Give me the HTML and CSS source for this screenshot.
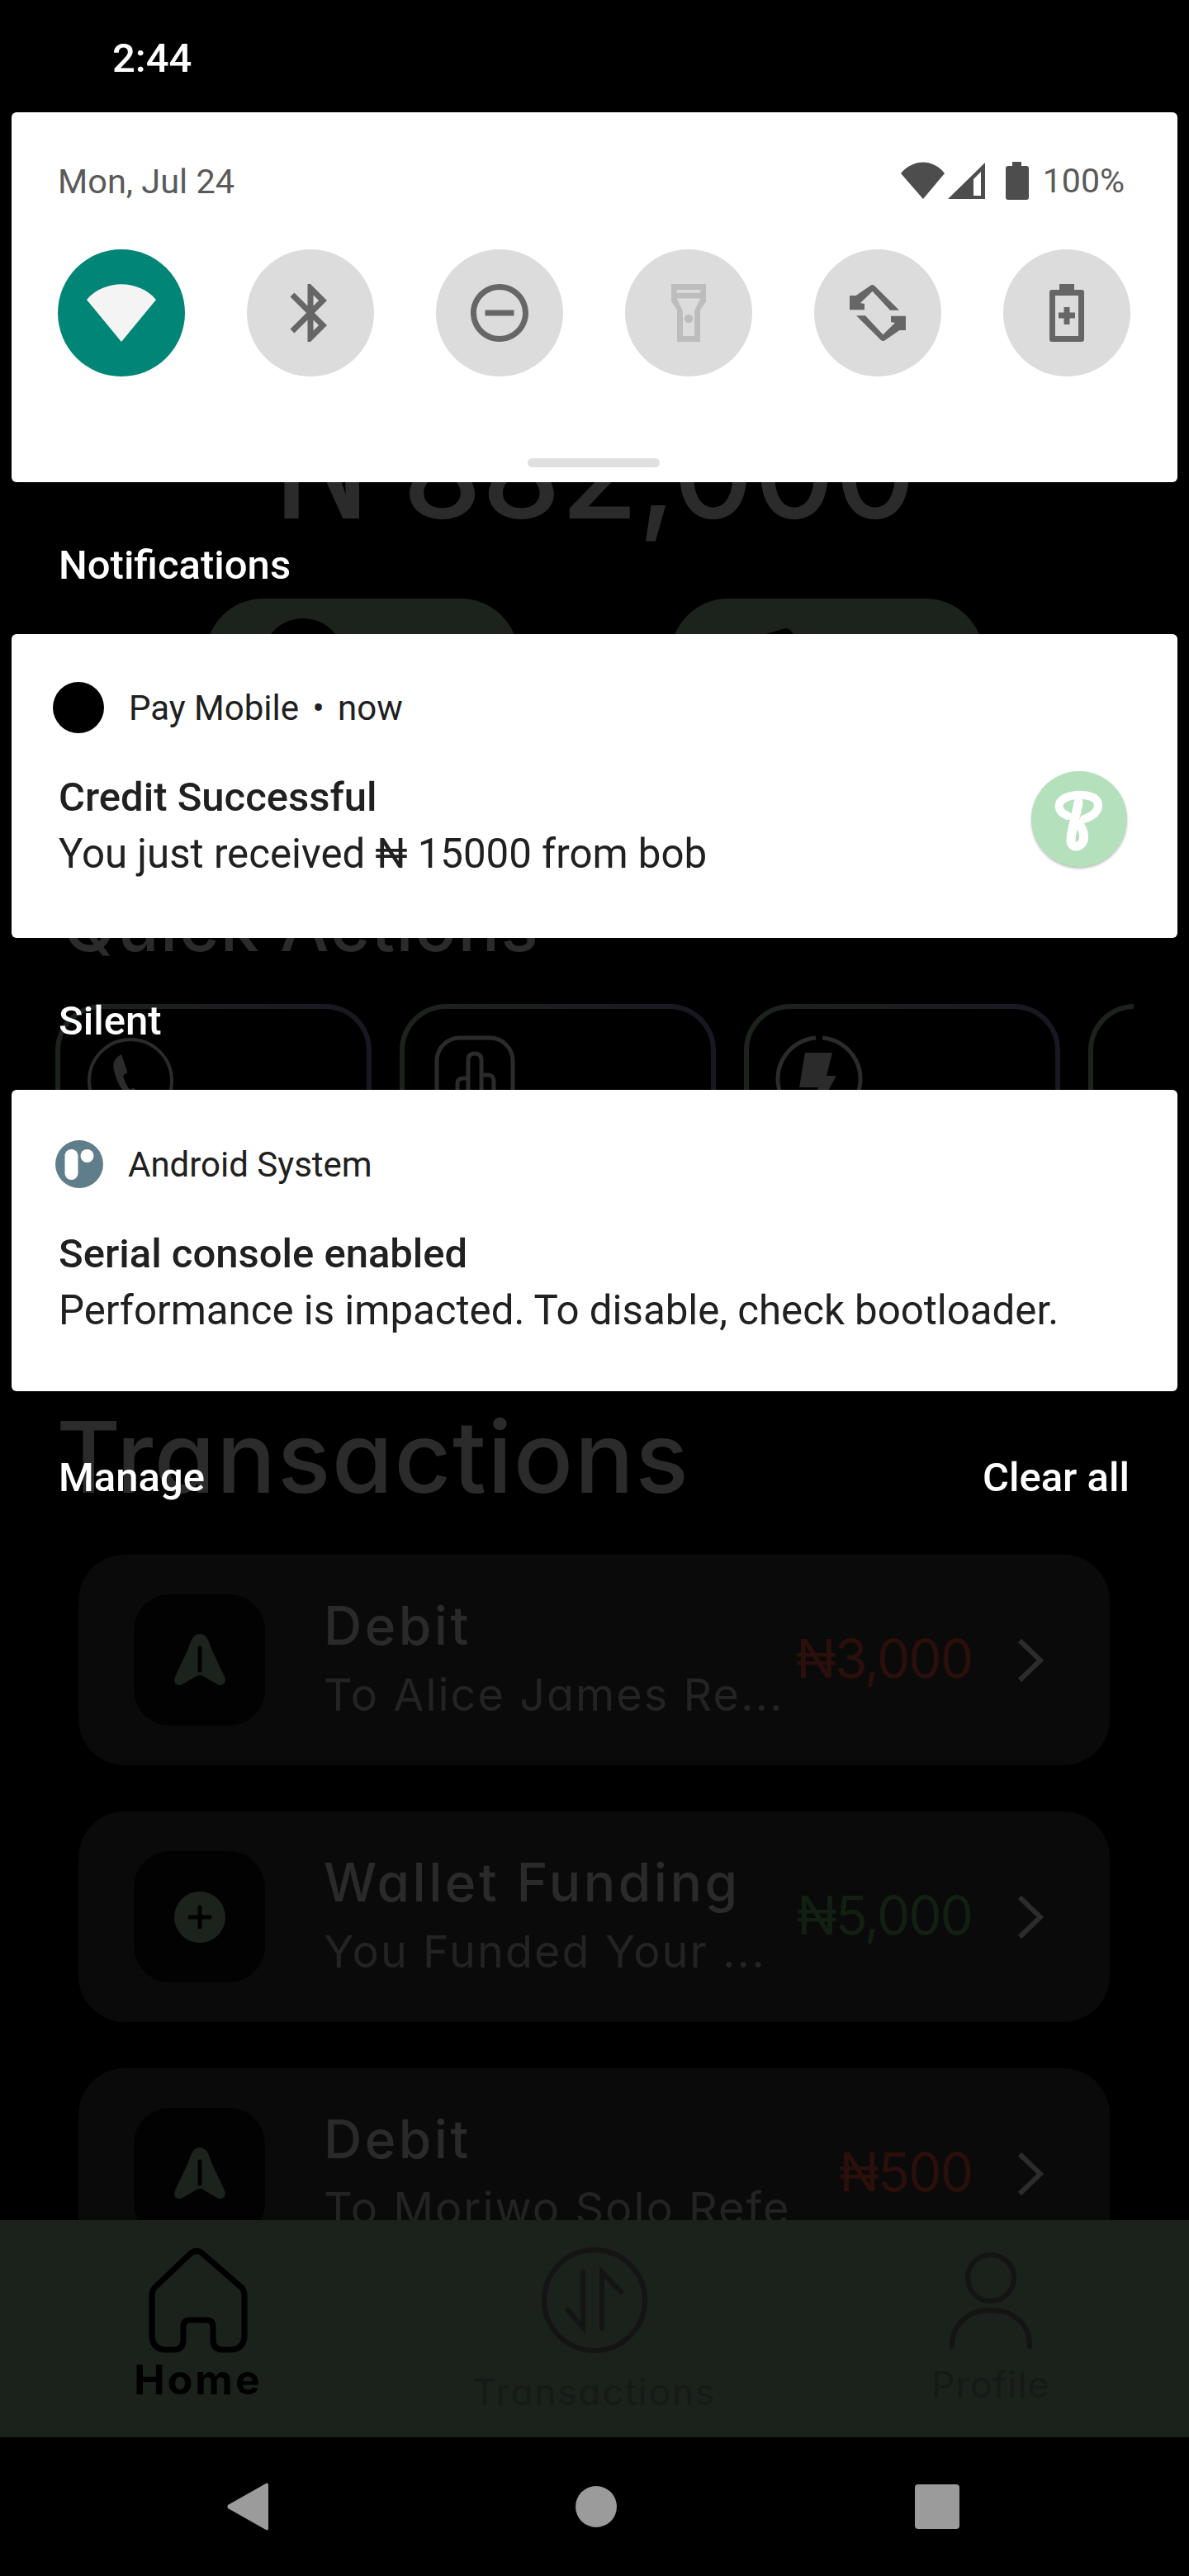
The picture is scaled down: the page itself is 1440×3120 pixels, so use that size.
FILE: index.html
```html
<!DOCTYPE html>
<html lang="en">
<head>
  <meta charset="UTF-8" />
  <title>Pay Mobile - Notification Shade</title>
  <link rel="stylesheet" href="styles.css">
</head>
<body>
  <div class="screen">

    <!-- the app, dimmed behind the shade -->
    <div class="app">
      <div class="scroll">
        <div class="balance"><span class="naira">₦</span> 882,000</div>

        <div class="pills">
          <div class="pill"><span class="pill-dot"></span></div>
          <div class="pill pill-send">
            <svg width="60" height="24" viewBox="0 0 60 24"><path d="M0 10L34 0q6 0 10 7l2 17H0z" fill="#000" /></svg>
          </div>
        </div>

        <h2 class="quick-title">Quick Actions</h2>

        <div class="actions">
          <div class="action">
            <svg width="110" height="110" viewBox="0 0 110 110" fill="none" stroke="#2b2b2b" stroke-width="4">
              <circle cx="55" cy="55" r="50" />
              <path d="M43 26c-5 3-8 8-6 16 3 14 10 26 20 35l6 5c3-2 6-5 5-7l-10-9-5 2c-5-7-8-13-9-20l5-4z" fill="#2b2b2b" />
            </svg>
          </div>
          <div class="action">
            <svg width="110" height="110" viewBox="0 0 110 110" fill="none" stroke="#2b2b2b" stroke-width="5">
              <rect x="9" y="3" width="92" height="104" rx="28" />
              <path d="M34 100V58q0-6 7-6h6M47 80V30q0-8 8-8t8 8v60M63 48h8q7 0 7 8v44" />
            </svg>
          </div>
          <div class="action">
            <svg width="110" height="110" viewBox="0 0 110 110" fill="none" stroke="#2b2b2b" stroke-width="5">
              <path d="M51 3a50 50 0 1 0 8 0" />
              <path d="M38 21h33l-7 28h12l-29 52 7-38H31z" fill="#2b2b2b" stroke="none" />
            </svg>
          </div>
          <div class="action">
            <svg width="110" height="110" viewBox="0 0 110 110" fill="none" stroke="#2b2b2b" stroke-width="5">
              <path d="M48 20c-9 8-12 18-10 30" stroke-width="10" />
            </svg>
          </div>
        </div>

        <h2 class="trans-title">Transactions</h2>

        <div class="list">
          <div class="tx">
            <div class="tx-icon">
              <svg width="64" height="64" viewBox="0 0 64 64"><path d="M32 0c8 0 11 8 14 18l16 34c3 8-3 12-9 9L36 51q-4-2-8 0L11 61c-6 3-12-1-9-9l16-34C21 8 24 0 32 0z" fill="#1c231c" /><path d="M32 17v27" stroke="#020202" stroke-width="5" stroke-linecap="round" /></svg>
            </div>
            <div class="tx-text">
              <div class="tx-name">Debit</div>
              <div class="tx-sub">To Alice James Re...</div>
            </div>
            <div class="tx-amt debit">₦3,000</div>
            <svg class="tx-arrow" width="32" height="52" viewBox="0 0 32 52"><path d="M3 2l25 24L3 50" fill="none" stroke="#2c2c2c" stroke-width="6" /></svg>
          </div>

          <div class="tx">
            <div class="tx-icon">
              <svg width="64" height="64" viewBox="0 0 64 64"><circle cx="32" cy="32" r="31" fill="#1c231c" /><path d="M32 20v24M20 32h24" stroke="#020202" stroke-width="5" stroke-linecap="round" /></svg>
            </div>
            <div class="tx-text">
              <div class="tx-name">Wallet Funding</div>
              <div class="tx-sub">You Funded Your ...</div>
            </div>
            <div class="tx-amt credit">₦5,000</div>
            <svg class="tx-arrow" width="32" height="52" viewBox="0 0 32 52"><path d="M3 2l25 24L3 50" fill="none" stroke="#2c2c2c" stroke-width="6" /></svg>
          </div>

          <div class="tx">
            <div class="tx-icon">
              <svg width="64" height="64" viewBox="0 0 64 64"><path d="M32 0c8 0 11 8 14 18l16 34c3 8-3 12-9 9L36 51q-4-2-8 0L11 61c-6 3-12-1-9-9l16-34C21 8 24 0 32 0z" fill="#1c231c" /><path d="M32 17v27" stroke="#020202" stroke-width="5" stroke-linecap="round" /></svg>
            </div>
            <div class="tx-text">
              <div class="tx-name">Debit</div>
              <div class="tx-sub">To Moriwo Solo Refe</div>
            </div>
            <div class="tx-amt debit">₦500</div>
            <svg class="tx-arrow" width="32" height="52" viewBox="0 0 32 52"><path d="M3 2l25 24L3 50" fill="none" stroke="#2c2c2c" stroke-width="6" /></svg>
          </div>
        </div>
      </div>

      <nav class="tabs">
        <div class="tab tab-home">
          <svg width="120" height="128" viewBox="0 0 120 128" fill="none" stroke="#000" stroke-width="7">
            <path d="M49 9q9-9 18 0l46 40q3 4 3 9v48q0 18-18 18h-8q-12 0-12-12V96q0-8-8-8H50q-8 0-8 8v16q0 12-12 12h-8Q4 124 4 106V58q0-5 3-9z" />
          </svg>
          <span>Home</span>
        </div>
        <div class="tab tab-trans">
          <svg width="130" height="128" viewBox="0 0 130 128" fill="none" stroke="#141414" stroke-width="6">
            <ellipse cx="65" cy="64" rx="61" ry="61" />
            <path d="M51 30v67L33 76M74 98V30l23 24" stroke-linecap="round" />
          </svg>
          <span>Transactions</span>
        </div>
        <div class="tab tab-profile">
          <svg width="110" height="128" viewBox="0 0 110 128" fill="none" stroke="#141414" stroke-width="6">
            <circle cx="55" cy="37" r="28" />
            <path d="M8 120c0-28 20-44 47-44s47 16 47 44" stroke-linecap="round" />
          </svg>
          <span>Profile</span>
        </div>
      </nav>
    </div>

    <div class="navbar">
      <svg width="50" height="58" viewBox="0 0 50 58"><path d="M47 1c2-1 3 0 3 2v52c0 2-1 3-3 2L1 31q-1-2 0-4z" fill="#9b9b9b" /></svg>
      <span class="nav-home"></span>
      <span class="nav-recent"></span>
    </div>

    <!-- notification shade on top of the app -->
    <div class="shade">
      <div class="status"><span class="clock">2:44</span></div>

      <section class="qs">
        <div class="qs-top">
          <span class="qs-date">Mon, Jul 24</span>
          <div class="qs-status">
            <svg width="54" height="46" viewBox="0 0 54 46"><path d="M0 14C15 -4 39 -4 53 14L27 45z" fill="#4d4d4d" /></svg>
            <svg class="sig" width="46" height="44" viewBox="0 0 46 44"><path fill-rule="evenodd" d="M45 0v44H0zM31 20v20h9V11z" fill="#4d4d4d" /></svg>
            <svg class="bat" width="28" height="46" viewBox="0 0 28 46"><path d="M8 0h11v5h6q3 0 3 3v35q0 3-3 3H3q-3 0-3-3V8q0-3 3-3h5z" fill="#4d4d4d" /></svg>
            <span class="qs-batt">100%</span>
          </div>
        </div>

        <div class="toggles">
          <div class="toggle on">
            <svg width="84" height="84" viewBox="0 0 84 84"><path d="M0 26C21 1 63 1 84 26L42 77z" fill="#f4f4f4" /></svg>
          </div>
          <div class="toggle">
            <svg width="84" height="84" viewBox="0 0 24 24"><path d="M17.71 7.71L12 2h-1v7.59L6.41 5 5 6.41 10.59 12 5 17.59 6.41 19 11 14.41V22h1l5.71-5.71-4.3-4.29 4.3-4.29zM13 5.83l1.88 1.88L13 9.59V5.83zm1.88 10.46L13 18.17v-3.76l1.88 1.88z" fill="#666" /></svg>
          </div>
          <div class="toggle">
            <svg width="84" height="84" viewBox="0 0 24 24"><path d="M12 2C6.48 2 2 6.48 2 12s4.48 10 10 10 10-4.48 10-10S17.52 2 12 2zm0 18c-4.42 0-8-3.58-8-8s3.58-8 8-8 8 3.58 8 8-3.58 8-8 8zM7 11h10v2H7z" fill="#666" /></svg>
          </div>
          <div class="toggle">
            <svg width="84" height="84" viewBox="0 0 24 24"><path fill-rule="evenodd" d="M6 2h12v6l-2 3v11H8V11L6 8zM7.900 4v1.100h8.200V4zM7.900 7l2.100 4.300V20h4v-8.700L16.100 7z" fill="#bdbdbd" /><circle cx="12" cy="14" r="1.500" fill="#bdbdbd" /></svg>
          </div>
          <div class="toggle">
            <svg width="84" height="84" viewBox="0 0 84 84" fill="#666">
              <path d="M8 21h7.600L33 9q2.600-2 5 0l30 29.700H57L35.600 15.700 21 30l5 1v7.300H8z" />
              <path d="M8 21h7.600L33 9q2.600-2 5 0l30 29.700H57L35.600 15.700 21 30l5 1v7.300H8z" transform="rotate(180 42 42)" />
            </svg>
          </div>
          <div class="toggle">
            <svg width="84" height="84" viewBox="0 0 84 84"><path fill-rule="evenodd" d="M33 7h18v7h9q3 0 3 3v57q0 3-3 3H24q-3 0-3-3V17q0-3 3-3h9zM28 21v49h28V21z" fill="#666" /><path d="M38.500 35h7v6.500H52v7h-6.500V56h-7v-7.500H32v-7h6.500z" fill="#666" /></svg>
          </div>
        </div>

        <div class="qs-handle"></div>
      </section>

      <h3 class="section-label">Notifications</h3>

      <article class="note note-pay">
        <div class="note-head">
          <span class="app-dot"></span>
          <span class="note-app">Pay Mobile <i>•</i> now</span>
        </div>
        <div class="note-row">
          <div class="note-copy">
            <div class="note-title">Credit Successful</div>
            <div class="note-body">You just received ₦ 15000 from bob</div>
          </div>
          <div class="note-logo">
            <svg width="116" height="116" viewBox="0 0 116 116" fill="none" stroke="#fff" stroke-linecap="round">
              <path d="M44 54C32 50 30 38 40 33c12-6 42-7 41 9-1 10-11 14-17 16" stroke-width="10" />
              <path d="M57 38c-3 18-9 34-9 46 0 10 12 9 15 0 2-8-1-14-5-20" stroke-width="11" />
            </svg>
          </div>
        </div>
      </article>

      <h3 class="section-label">Silent</h3>

      <article class="note note-sys">
        <div class="note-head">
          <svg class="sys-icon" width="58" height="58" viewBox="0 0 58 58">
            <circle cx="29" cy="29" r="29" fill="#607d8b" />
            <rect x="11.500" y="11" width="16" height="37" rx="8" fill="#fff" />
            <circle cx="38.500" cy="19" r="8" fill="#fff" />
          </svg>
          <span class="note-app">Android System</span>
        </div>
        <div class="note-title">Serial console enabled</div>
        <div class="note-body">Performance is impacted. To disable, check bootloader.</div>
      </article>

      <div class="shade-foot">
        <span>Manage</span>
        <span>Clear all</span>
      </div>
    </div>
  </div>
</body>
</html>
```

FILE: styles.css
```css
* { box-sizing: border-box; }
body { margin: 0; background: #000; font-family: Roboto, "Liberation Sans", sans-serif; }
h2, h3 { margin: 0; font-weight: normal; }

.screen { position: relative; width: 1440px; height: 3120px; overflow: hidden; background: #000; }

/* dimmed app */
.app { height: 2952px; display: flex; flex-direction: column; font-family: Inter, "Noto Sans", sans-serif; font-feature-settings: "cv11"; }
.scroll { flex: 1; overflow: hidden; }

.balance { margin-top: 478px; height: 190px; line-height: 190px; text-align: center; font-size: 152px; font-weight: 500; color: #2b2b2b; white-space: nowrap; }
.naira { display: inline-block; transform: scaleY(1.4); transform-origin: 50% 150px; }

.pills { display: flex; gap: 184px; margin-top: 57px; padding-left: 249px; }
.pill { width: 379px; height: 180px; background: #1c231c; border-radius: 70px 70px 0 0; padding: 24px 0 0 68px; }
.pill-dot { display: block; width: 100px; height: 100px; border-radius: 50%; background: #000; }
.pill-send { padding: 36px 0 0 105px; }

.quick-title { margin-top: 167px; padding-left: 76px; height: 100px; line-height: 100px; font-size: 84px; font-weight: 500; letter-spacing: 1.500px; color: #2b2b2b; }

.actions { display: flex; gap: 34px; width: 1373px; margin-top: 44px; padding-left: 67px; overflow: hidden; }
.action { flex: 0 0 383px; height: 260px; padding: 32px 0 0 30px; border: 6px solid transparent; border-radius: 56px; background: linear-gradient(#000, #000) padding-box, linear-gradient(90deg, #1c231c, #1a1622) border-box; }

.trans-title { margin-top: 219px; padding-left: 68px; height: 140px; line-height: 140px; font-size: 120px; font-weight: 500; letter-spacing: 1.400px; color: #2b2b2b; }

.list { display: flex; flex-direction: column; gap: 56px; margin: 48px 96px 0 95px; }
.tx { display: flex; align-items: center; height: 255px; padding-left: 67px; background: #0a0a0a; border-radius: 56px; }
.tx-icon { flex: 0 0 159px; height: 159px; display: flex; align-items: center; justify-content: center; background: #020202; border-radius: 44px; margin-right: 71px; }
.tx-text { flex: 0 0 560px; padding-bottom: 4px; white-space: nowrap; }
.tx-name { margin-bottom: 4px; font-size: 64px; font-weight: 500; line-height: 84px; letter-spacing: 3.500px; color: #2a2a2a; }
.tx-sub { font-size: 54px; line-height: 76px; letter-spacing: 2px; color: #232323; }
.tx-amt { flex: 1; padding-bottom: 4px; text-align: right; font-size: 64px; letter-spacing: -2px; }
.debit { color: #2a0f0b; }
.credit { color: #122012; }
.tx-arrow { margin: 0 80px 0 55px; flex: none; }

.tabs { height: 263px; flex: none; display: flex; background: #1b211b; }
.tab { flex: 1; display: flex; flex-direction: column; align-items: center; padding-top: 33px; white-space: nowrap; color: #141a15; }
.tab span { line-height: 56px; }
.tab-home span { margin-top: 4px; font-size: 50px; font-weight: 700; letter-spacing: 3px; color: #000; }
.tab-trans span { margin-top: 19px; font-size: 44px; letter-spacing: 2px; }
.tab-profile span { margin-top: 10px; font-size: 44px; letter-spacing: 1.500px; }

/* android nav bar */
.navbar { height: 168px; display: flex; align-items: center; padding: 0 278px 0 275px; justify-content: space-between; }
.nav-home { width: 50px; height: 50px; margin-left: 11px; border-radius: 50%; background: #9b9b9b; }
.nav-recent { width: 54px; height: 54px; border-radius: 4px; background: #9b9b9b; }

/* shade */
.shade { position: absolute; top: 0; left: 0; width: 1440px; }
.status { height: 136px; padding: 4px 0 0 136px; display: flex; align-items: center; }
.clock { font-size: 49px; font-weight: 500; color: #fff; }

.qs { margin: 0 14px; height: 448px; background: #fff; border-radius: 6px; padding: 60px 0 0 56px; position: relative; }
.qs-top { display: flex; justify-content: space-between; align-items: center; height: 46px; padding-right: 64px; }
.qs-date { font-size: 41.500px; color: #5a5a5a; }
.qs-status { display: flex; align-items: center; }
.qs-status svg { display: block; }
.sig { margin-left: 3px; }
.bat { margin: 0 17px 0 24px; }
.qs-batt { font-size: 41px; color: #5a5a5a; }

.toggles { display: flex; gap: 75px; margin-top: 60px; }
.toggle { width: 154px; height: 154px; display: flex; align-items: center; justify-content: center; border-radius: 50%; background: #dcdcdc; }
.toggle.on { background: #008577; }

.qs-handle { position: absolute; left: 625px; top: 419px; width: 160px; height: 11px; border-radius: 6px; background: #e0e0e0; }

.section-label { padding-left: 71px; font-size: 49px; font-weight: 500; color: #fff; height: 184px; line-height: 202px; }

.note { margin: 0 14px; background: #fff; border-radius: 6px; padding: 0 0 0 57px; color: #202020; }
.note-pay { height: 368px; padding-top: 58px; }
.note-sys { height: 365px; padding-top: 59px; }
.note-head { display: flex; align-items: center; height: 62px; }
.app-dot { width: 62px; height: 62px; margin-left: -7px; border-radius: 50%; background: #000; }
.sys-icon { margin-left: -4px; }
.note-app { margin-left: 30px; font-size: 42px; }
.note-app i { font-style: normal; margin: 0 6px; }
.note-row { display: flex; justify-content: space-between; align-items: center; padding-right: 61px; }
.note-title { font-size: 49px; font-weight: 500; line-height: 68px; margin-top: 44px; white-space: nowrap; }
.note-body { font-size: 49.200px; line-height: 68px; white-space: nowrap; }
.note-logo { width: 116px; height: 116px; margin-top: 28px; border-radius: 50%; background: #b5e0bc; box-shadow: 0 2px 3px rgba(0,0,0,0.25); }

.shade-foot { display: flex; justify-content: space-between; padding: 73px 72px 0 71px; font-size: 49px; font-weight: 500; line-height: 64px; color: #fff; }
```
